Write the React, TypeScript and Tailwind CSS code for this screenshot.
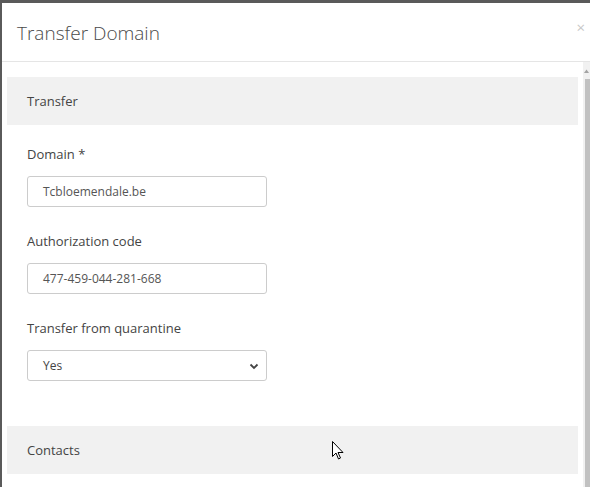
import React from 'react';

const font = { fontFamily: '"Open Sans", "Liberation Sans", sans-serif' };

const Field: React.FC<{ label: string; children: React.ReactNode; first?: boolean }> = ({ label, children, first }) => (
  <div className={first ? 'mt-[20px]' : 'mt-[25px]'}>
    <p className="h-[18px] text-[13px] leading-[18px] text-[#444]">{label}</p>
    <div className="mt-[13px]">{children}</div>
  </div>
);

const SectionHead: React.FC<{ title: string }> = ({ title }) => (
  <div className="flex h-[48px] items-center bg-[#f1f1f1] px-[20px] pt-[1px] text-[13px] text-[#444]">{title}</div>
);

export default function App() {
  return (
    <div className="relative h-[487px] w-[590px] overflow-hidden bg-[#5a5a5a] pl-[2px] pt-[3px]" style={font}>
      <div className="flex h-full flex-col bg-white">
        {/* Header */}
        <div className="relative flex h-[59px] shrink-0 items-center border-b border-[#e5e5e5] px-[15px] pt-[2px]">
          <h3 className="text-[19px] font-light leading-none text-[#4a4a4a]">Transfer Domain</h3>
          <span className="absolute right-[5px] top-[17px] text-[15px] leading-none text-[#c8c8c8]">×</span>
        </div>

        <div className="flex min-h-0 flex-1">
          <div className="flex-1 overflow-hidden px-[5px] pt-[15px]">
            <SectionHead title="Transfer" />
            <div className="px-[20px]">
              <Field label="Domain *" first>
                <div className="flex h-[31px] w-[240px] items-center rounded-[3px] border border-[#ccc] pl-[15px] text-[12px] text-[#555]">
                  Tcbloemendale.be
                </div>
              </Field>
              <Field label="Authorization code">
                <div className="flex h-[31px] w-[240px] items-center rounded-[3px] border border-[#ccc] pl-[15px] text-[12px] text-[#555]">
                  477-459-044-281-668
                </div>
              </Field>
              <Field label="Transfer from quarantine">
                <div className="flex h-[31px] w-[240px] items-center justify-between rounded-[3px] border border-[#ccc] pl-[15px] pr-[7px] pt-[1px] text-[12px] text-[#444]">
                  <span>Yes</span>
                  <svg width="10" height="7" viewBox="0 0 10 7" fill="none">
                    <path d="M1.5 1.5 L5 5 L8.5 1.5" stroke="#444" strokeWidth="1.8" />
                  </svg>
                </div>
              </Field>
            </div>
            <div className="mt-[45px]">
              <SectionHead title="Contacts" />
            </div>
          </div>

          {/* Scrollbar */}
          <div className="flex w-[7px] shrink-0 flex-col bg-[#f1f1f1]">
            <div className="flex h-[17px] items-center justify-end pr-[1px]">
              <svg width="5" height="4" viewBox="0 0 5 4">
                <path d="M0 4 L2.5 0.5 L5 4 Z" fill="#a3a3a3" />
              </svg>
            </div>
            <div className="ml-[2px] flex-1 bg-[#c1c1c1]" />
          </div>
        </div>
      </div>

      {/* Mouse cursor */}
      <svg className="absolute left-[332px] top-[441px]" width="13" height="20" viewBox="0 0 13 20">
        <path
          d="M0.5 0.5 L0.5 15.5 L4 12 L6.5 18 L8.5 17 L6 11.5 L11 11.5 Z"
          fill="white"
          stroke="black"
          strokeWidth="1"
          strokeLinejoin="miter"
        />
      </svg>
    </div>
  );
}
